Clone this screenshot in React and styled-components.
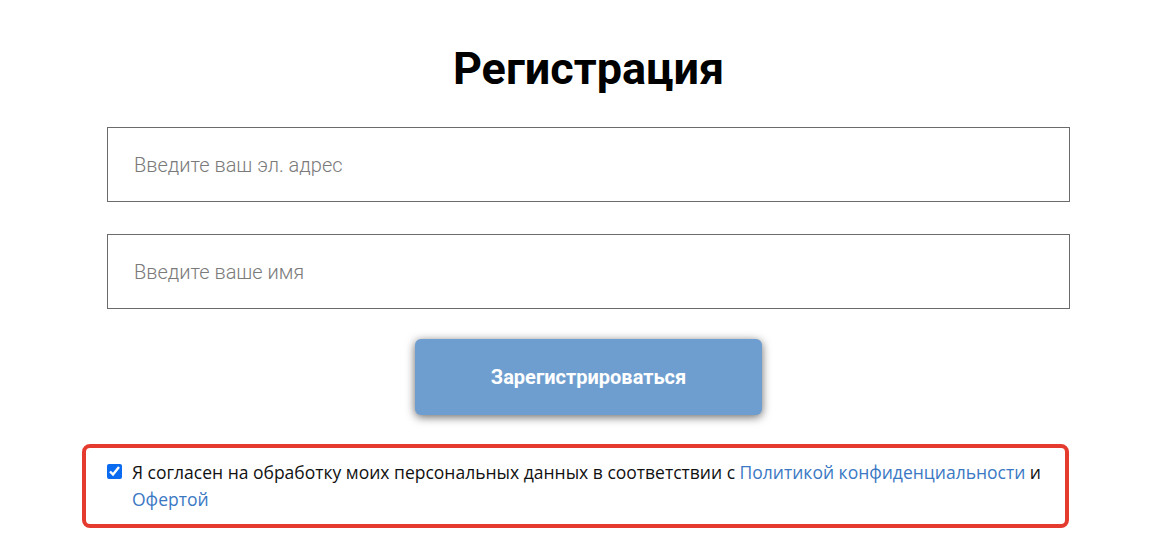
import React from 'react';
import styled, { createGlobalStyle } from 'styled-components';

const GlobalStyle = createGlobalStyle`
  * { box-sizing: border-box; }
  body {
    margin: 0;
    background: #fff;
    font-family: Roboto, "Liberation Sans", sans-serif;
  }
`;

const Page = styled.div`
  padding: 44px 99px 0 107px;
`;

const Form = styled.form`
  display: flex;
  flex-direction: column;
  align-items: center;
`;

const Title = styled.h1`
  margin: 0 0 33px;
  font-family: Roboto, sans-serif;
  font-size: 45px;
  line-height: 50px;
  font-weight: 700;
  color: #000;
`;

const Field = styled.input`
  width: 100%;
  height: 75px;
  margin-bottom: ${(p) => p.$gap}px;
  padding: 0 26px;
  border: 1px solid #6b6b6b;
  border-radius: 0;
  font-family: Roboto, sans-serif;
  font-size: 20px;
  font-weight: 300;
  color: #333;
  outline: none;
  &::placeholder {
    color: #7a7a7a;
  }
`;

const Submit = styled.button`
  width: 347px;
  height: 76px;
  margin-bottom: 29px;
  border: none;
  border-radius: 6px;
  background: #6e9ecf;
  box-shadow: 0 2px 10px rgba(0, 0, 0, 0.6);
  color: #fff;
  font-family: Roboto, sans-serif;
  font-size: 20px;
  font-weight: 700;
  cursor: pointer;
`;

const Consent = styled.label`
  align-self: stretch;
  margin-left: -25px;
  margin-right: 1px;
  display: flex;
  align-items: flex-start;
  gap: 10px;
  padding: 11px 8px 11px 21px;
  border: 4px solid #e53b2f;
  border-radius: 8px;
  font-family: "Open Sans", "Noto Sans", sans-serif;
  font-size: 17.5px;
  line-height: 27px;
  color: #111;
`;

const Check = styled.input`
  flex: none;
  width: 15px;
  height: 15px;
  margin: 5px 0 0;
  accent-color: #0b6bf0;
`;

const Link = styled.a`
  color: #3b78c4;
  text-decoration: none;
`;

export default function App() {
  return (
    <Page>
      <GlobalStyle />
      <Form onSubmit={(e) => e.preventDefault()}>
        <Title>Регистрация</Title>
        <Field type="email" placeholder="Введите ваш эл. адрес" $gap={32} />
        <Field type="text" placeholder="Введите ваше имя" $gap={30} />
        <Submit type="submit">Зарегистрироваться</Submit>
        <Consent>
          <Check type="checkbox" defaultChecked />
          <span>
            Я согласен на обработку моих персональных данных в соответствии с{' '}
            <Link href="#">Политикой конфиденциальности</Link> и{' '}
            <Link href="#">Офертой</Link>
          </span>
        </Consent>
      </Form>
    </Page>
  );
}
